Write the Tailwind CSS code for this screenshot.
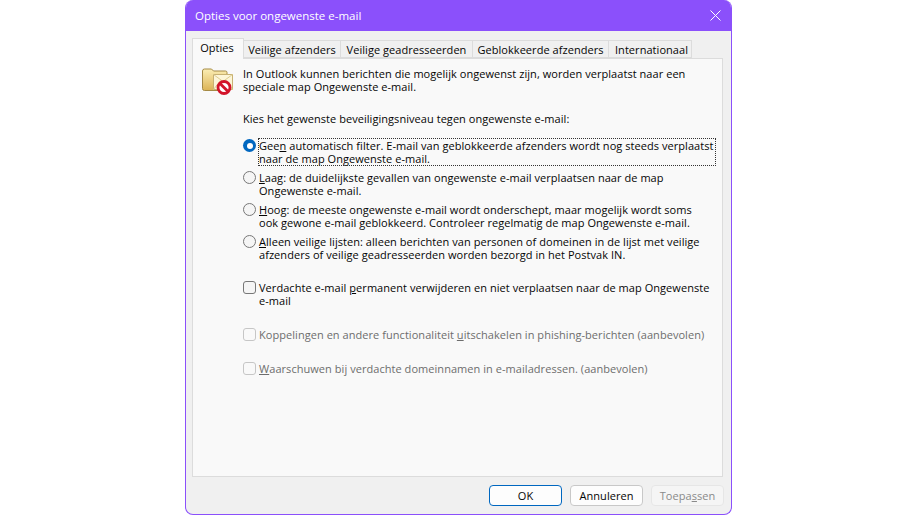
<!DOCTYPE html>
<html lang="nl">
  <head>
    <meta charset="UTF-8" />
    <title>Opties voor ongewenste e-mail</title>
    <script src="https://cdn.jsdelivr.net/npm/@tailwindcss/browser@4"></script>
  </head>
  <body class="bg-white h-[515px] overflow-hidden font-['Open_Sans','Noto_Sans',sans-serif] text-[11px] tracking-[0.05px] leading-[13px] text-[#050505]">
    <div class="ml-[185px] w-[547px] h-[515px] flex flex-col bg-[#f0f0f0] border border-t-0 border-[#8b50fb] rounded-[8px] overflow-hidden">
      <!-- title bar -->
      <div class="h-[31px] shrink-0 bg-[#8b50fb] text-white flex items-center justify-between pl-[9px] pr-[10px]">
        <span class="text-[11.5px] tracking-normal pb-[1px]">Opties voor ongewenste e-mail</span>
        <svg width="11" height="11" viewBox="0 0 11 11" class="mb-[1px]" fill="none" stroke="#fff" stroke-width="1"><path d="M0.5 0.5l10 10M10.5 0.5l-10 10" /></svg>
      </div>

      <!-- tabs -->
      <div class="flex items-end h-[28px] shrink-0 pl-[6px] relative z-10">
        <div class="h-[21px] w-[52px] bg-[#f9f9f9] border border-b-0 border-[#dcdcdc] flex items-center justify-center pb-[3px] pr-[2px]">Opties</div>
        <div class="h-[18px] mb-[1px] w-[97px] bg-[#f0f0f0] border border-l-0 border-[#dcdcdc] flex items-center justify-center">Veilige afzenders</div>
        <div class="h-[18px] mb-[1px] w-[132px] bg-[#f0f0f0] border border-l-0 border-[#dcdcdc] flex items-center justify-center">Veilige geadresseerden</div>
        <div class="h-[18px] mb-[1px] w-[136px] bg-[#f0f0f0] border border-l-0 border-[#dcdcdc] flex items-center justify-center">Geblokkeerde afzenders</div>
        <div class="h-[18px] mb-[1px] w-[83px] bg-[#f0f0f0] border border-l-0 border-[#dcdcdc] flex items-center justify-center pl-[3px]">Internationaal</div>
      </div>

      <!-- panel -->
      <div class="ml-[6px] w-[531px] h-[419px] shrink-0 -mt-[1px] bg-[#f9f9f9] border border-[#dcdcdc] pt-[8px] pl-[9px] whitespace-nowrap">
        <div class="flex gap-[9px]">
          <svg width="32" height="30" viewBox="0 0 32 30" class="shrink-0">
            <defs>
              <linearGradient id="folder" x1="0" y1="0" x2="0" y2="1">
                <stop offset="0" stop-color="#fbeeb4" />
                <stop offset="1" stop-color="#dcb355" />
              </linearGradient>
            </defs>
            <path d="M0.500 4q0-2 2-2h7l2 2h12q1.500 0 1.500 1.500V22q0 1.500-1.500 1.500H2.500q-2 0-2-2z" fill="url(#folder)" stroke="#a58a45" />
            <path d="M11.500 7.500h19v15h-19z" fill="#fdf6d8" stroke="#c8b273" />
            <path d="M11.500 7.500l9.500 7 9.500-7M11.500 22.500l7-9M30.500 22.500l-7-9" fill="none" stroke="#dccb90" />
            <circle cx="22" cy="20.500" r="6" fill="#fff" stroke="#d3142a" stroke-width="2.800" />
            <path d="M18 16.500l8 8" stroke="#d3142a" stroke-width="2.800" />
          </svg>
          <p>In Outlook kunnen berichten die mogelijk ongewenst zijn, worden verplaatst naar een<br />speciale map Ongewenste e-mail.</p>
        </div>

        <p class="ml-[41px] mt-[15px]">Kies het gewenste beveiligingsniveau tegen ongewenste e-mail:</p>

        <div class="ml-[41px] mt-[14px] flex flex-col gap-[6px]">
          <div class="flex items-start gap-[3px]">
            <span class="w-[13px] h-[13px] shrink-0 rounded-full bg-[#0067c0] flex items-center justify-center"><span class="w-[6px] h-[6px] rounded-full bg-white"></span></span>
            <span class="outline-1 outline-dotted outline-[#333] w-[456px]">Gee<u>n</u> automatisch filter. E-mail van geblokkeerde afzenders wordt nog steeds verplaatst<br />naar de map Ongewenste e-mail.</span>
          </div>
          <div class="flex items-start gap-[3px]">
            <span class="w-[13px] h-[13px] shrink-0 rounded-full bg-[#f5f5f5] border border-[#777]"></span>
            <span><u>L</u>aag: de duidelijkste gevallen van ongewenste e-mail verplaatsen naar de map<br />Ongewenste e-mail.</span>
          </div>
          <div class="flex items-start gap-[3px]">
            <span class="w-[13px] h-[13px] shrink-0 rounded-full bg-[#f5f5f5] border border-[#777]"></span>
            <span><u>H</u>oog: de meeste ongewenste e-mail wordt onderschept, maar mogelijk wordt soms<br />ook gewone e-mail geblokkeerd. Controleer regelmatig de map Ongewenste e-mail.</span>
          </div>
          <div class="flex items-start gap-[3px]">
            <span class="w-[13px] h-[13px] shrink-0 rounded-full bg-[#f5f5f5] border border-[#777]"></span>
            <span><u>A</u>lleen veilige lijsten: alleen berichten van personen of domeinen in de lijst met veilige<br />afzenders of veilige geadresseerden worden bezorgd in het Postvak IN.</span>
          </div>
        </div>

        <div class="ml-[41px] mt-[20px] flex items-start gap-[3px]">
          <span class="w-[13px] h-[13px] shrink-0 rounded-[3px] bg-[#f5f5f5] border border-[#777]"></span>
          <span>Verdachte e-mail <u>p</u>ermanent verwijderen en niet verplaatsen naar de map Ongewenste<br />e-mail</span>
        </div>
        <div class="ml-[41px] mt-[21px] flex items-start gap-[3px] text-[#6d6d6d]">
          <span class="w-[13px] h-[13px] shrink-0 rounded-[3px] border border-[#c6c6c6]"></span>
          <span>Koppelingen en andere functionaliteit <u>u</u>itschakelen in phishing-berichten (aanbevolen)</span>
        </div>
        <div class="ml-[41px] mt-[21px] flex items-start gap-[3px] text-[#6d6d6d]">
          <span class="w-[13px] h-[13px] shrink-0 rounded-[3px] border border-[#c6c6c6]"></span>
          <span><u>W</u>aarschuwen bij verdachte domeinnamen in e-mailadressen. (aanbevolen)</span>
        </div>
      </div>

      <!-- buttons -->
      <div class="flex justify-end gap-[8px] pt-[8px] pr-[7px]">
        <button class="w-[73px] h-[21px] rounded-[4px] bg-[#fdfdfd] border border-[#0067c0]">OK</button>
        <button class="w-[73px] h-[21px] rounded-[4px] bg-[#fdfdfd] border border-[#c8c8c8]">Annuleren</button>
        <button class="w-[73px] h-[21px] rounded-[4px] bg-[#f5f5f5] border border-[#e6e6e6] text-[#8a8a8a]">Toepa<u>s</u>sen</button>
      </div>
    </div>
  </body>
</html>
